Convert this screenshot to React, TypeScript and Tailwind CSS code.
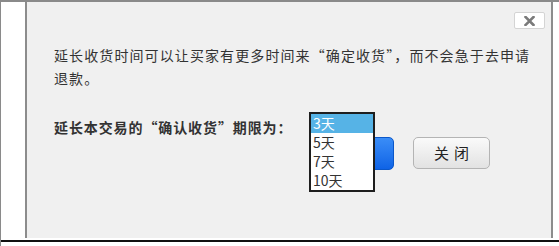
export default function App() {
  const opciones = ["3天", "5天", "7天", "10天"]

  return (
    <div className="relative w-[559px] h-[246px] bg-white border-t-2 border-l border-[#8a8a8a] font-['Noto_Sans_CJK_SC','Noto_Sans',sans-serif] text-[#333]">
      {/* Panel del diálogo */}
      <div className="ml-[24px] w-[528px] h-[236px] bg-[#f0f0f0] border-l-2 border-r-2 border-[#8c8c8c] relative">
        <div className="flex justify-end pt-[10px] pr-[6px]">
          <button className="w-[31px] h-[17px] bg-white border border-[#d4d4d4] rounded-[2px] flex items-center justify-center">
            <svg width="11" height="10" viewBox="0 0 11 10">
              <path d="M1.5 1 L9.5 9 M9.5 1 L1.5 9" stroke="#7a7a7a" strokeWidth="2.6" strokeLinecap="square" />
            </svg>
          </button>
        </div>

        <div className="pl-[27px] pr-[10px] mt-[15px] text-[14px] leading-[23px] tracking-[1.1px]">
          <p>
            延长收货时间可以让买家有更多时间来“确定收货”，而不会急于去申请
            <br />
            退款。
          </p>
        </div>

        <div className="pl-[27px] mt-[27px] text-[14px] leading-[20px] font-bold tracking-[0.9px] text-[#333]">
          延长本交易的“确认收货”期限为：
        </div>

        <div className="flex gap-[19px] pl-[289px]">
          <button className="w-[78px] h-[33px] rounded-[5px] bg-gradient-to-b from-[#3a8df7] to-[#0e63e6] border border-[#0b57c9]" />
          <button className="w-[77px] h-[32px] rounded-[5px] bg-gradient-to-b from-[#fafafa] to-[#e2e2e2] border border-[#b4b4b4] text-[15px] text-[#222] tracking-[5px] pl-[5px]">
            关闭
          </button>
        </div>

        {/* Lista desplegable */}
        <div className="absolute left-[282px] top-[110px] w-[66px] border-2 border-[#1e1e1e] bg-white">
          {opciones.map((o, i) => (
            <div
              key={o}
              className={
                i === 0
                  ? "h-[19px] leading-[19px] pl-[2px] text-[14px] bg-[#56b3e6] text-white"
                  : "h-[19px] leading-[19px] pl-[2px] text-[14px] text-[#333]"
              }
            >
              {o}
            </div>
          ))}
        </div>
      </div>

      <div className="mt-[2px] h-[2px] bg-[#111]" />
    </div>
  )
}
